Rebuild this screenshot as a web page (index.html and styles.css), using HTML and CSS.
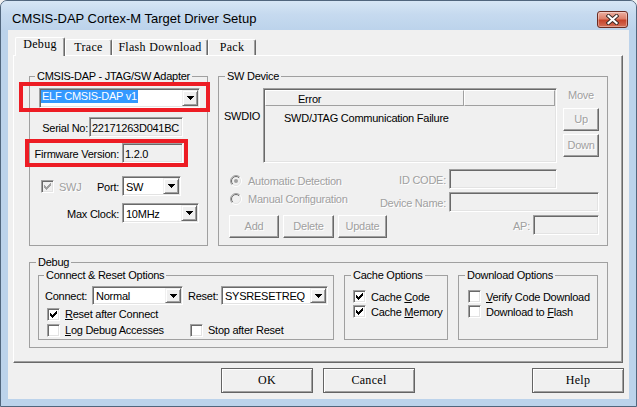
FILE: index.html
```html
<!DOCTYPE html>
<html lang="en">
<head>
<meta charset="utf-8">
<title>CMSIS-DAP Cortex-M Target Driver Setup</title>
<link rel="stylesheet" href="styles.css">
</head>
<body>
<div class="window">
  <div class="titlebar">
    <div class="title">CMSIS-DAP Cortex-M Target Driver Setup</div>
    <div class="close">
      <svg width="13" height="11" viewBox="0 0 13 11">
        <path d="M2.5 2 L10.5 9 M10.5 2 L2.5 9" stroke="#3a2a26" stroke-width="4" stroke-linecap="square"/>
        <path d="M2.5 2 L10.5 9 M10.5 2 L2.5 9" stroke="#ffffff" stroke-width="2.2" stroke-linecap="square"/>
      </svg>
    </div>
  </div>
  <div class="client">
    <div class="tabs">
      <div class="tab sel w-debug">Debug</div>
      <div class="tab w-trace">Trace</div>
      <div class="tab w-flash">Flash Download</div>
      <div class="tab w-pack">Pack</div>
    </div>
    <div class="panel">
      <div class="toprow">
        <fieldset class="grp adapter">
          <legend class="lg5">CMSIS-DAP - JTAG/SW Adapter</legend>
          <div class="row r-adapter">
            <div class="combo w-adp">
              <span class="val val-hl"><span class="hl">ELF CMSIS-DAP v1</span></span>
              <span class="drop"><svg width="7" height="4" viewBox="0 0 7 4"><path d="M0 0h7v1H0zM1 1h5v1H1zM2 2h3v1H2zM3 3h1v1H3z"/></svg></span>
            </div>
          </div>
          <div class="row r-serial">
            <span class="lbl w-serial">Serial No:</span>
            <span class="tb w-sn">22171263D041BC</span>
          </div>
          <div class="row r-fw">
            <span class="lbl w-l89">Firmware Version:</span>
            <span class="tb w-fw">1.2.0</span>
          </div>
          <div class="row r-swj">
            <span class="lblcell">
              <span class="cb cb-dis"><svg width="7" height="7" viewBox="0 0 7 7" fill="#a0a0a0"><path d="M6 0h1v1H6zM5 1h2v1H5zM0 2h1v1H0zM4 2h3v1H4zM0 3h2v1H0zM3 3h3v1H3zM0 4h5v1H0zM1 5h3v1H1zM2 6h1v1H2z"/></svg></span>
              <span class="dis swj">SWJ</span>
              <span class="lbl port">Port:</span>
            </span>
            <div class="combo w-port">
              <span class="val">SW</span>
              <span class="drop"><svg width="7" height="4" viewBox="0 0 7 4"><path d="M0 0h7v1H0zM1 1h5v1H1zM2 2h3v1H2zM3 3h1v1H3z"/></svg></span>
            </div>
          </div>
          <div class="row r-clk">
            <span class="lbl w-l89">Max Clock:</span>
            <div class="combo w-clk">
              <span class="val">10MHz</span>
              <span class="drop"><svg width="7" height="4" viewBox="0 0 7 4"><path d="M0 0h7v1H0zM1 1h5v1H1zM2 2h3v1H2zM3 3h1v1H3z"/></svg></span>
            </div>
          </div>
        </fieldset>

        <fieldset class="grp swdev">
          <legend>SW Device</legend>
          <div class="rowA">
            <div class="swdio">SWDIO</div>
            <div class="listview">
              <div class="lv-head"><span class="lv-c1">Error</span><span class="lv-c2"></span></div>
              <div class="lv-row">SWD/JTAG Communication Failure</div>
            </div>
            <div class="movecol">
              <div class="dis move">Move</div>
              <div class="btn3d dis up">Up</div>
              <div class="btn3d dis down">Down</div>
            </div>
          </div>
          <div class="rowB">
            <div class="leftcol">
              <div class="radio-row">
                <svg width="12" height="12" viewBox="0 0 12 12">
                  <defs>
                    <linearGradient id="ra1" x1="0" y1="0" x2="1" y2="1"><stop offset="0.5" stop-color="#a0a0a0"/><stop offset="0.5" stop-color="#ffffff"/></linearGradient>
                    <linearGradient id="ra2" x1="0" y1="0" x2="1" y2="1"><stop offset="0.5" stop-color="#696969"/><stop offset="0.5" stop-color="#e3e3e3"/></linearGradient>
                  </defs>
                  <circle cx="6" cy="6" r="5.5" fill="#f0f0f0" stroke="url(#ra1)"/>
                  <circle cx="6" cy="6" r="4.5" fill="none" stroke="url(#ra2)"/>
                  <circle cx="6" cy="6" r="2" fill="#a0a0a0"/>
                </svg>
                <span class="dis">Automatic Detection</span>
              </div>
              <div class="radio-row">
                <svg width="12" height="12" viewBox="0 0 12 12">
                  <defs>
                    <linearGradient id="rb1" x1="0" y1="0" x2="1" y2="1"><stop offset="0.5" stop-color="#a0a0a0"/><stop offset="0.5" stop-color="#ffffff"/></linearGradient>
                    <linearGradient id="rb2" x1="0" y1="0" x2="1" y2="1"><stop offset="0.5" stop-color="#696969"/><stop offset="0.5" stop-color="#e3e3e3"/></linearGradient>
                  </defs>
                  <circle cx="6" cy="6" r="5.5" fill="#f0f0f0" stroke="url(#rb1)"/>
                  <circle cx="6" cy="6" r="4.5" fill="none" stroke="url(#rb2)"/>
                </svg>
                <span class="dis">Manual Configuration</span>
              </div>
              <div class="btnrow">
                <span class="btn3d dis w-add">Add</span>
                <span class="btn3d dis w-del">Delete</span>
                <span class="btn3d dis w-upd">Update</span>
              </div>
            </div>
            <div class="rightcol">
              <div class="frow"><span class="lbl dis">ID CODE:</span><span class="tb w-id"></span></div>
              <div class="frow"><span class="lbl dis">Device Name:</span><span class="tb w-dn"></span></div>
              <div class="frow"><span class="lbl dis">AP:</span><span class="tb w-ap"></span></div>
            </div>
          </div>
        </fieldset>
      </div>

      <fieldset class="grp debug">
        <legend>Debug</legend>
        <div class="dbgrow">
          <fieldset class="grp connect">
            <legend class="lg5">Connect &amp; Reset Options</legend>
            <div class="crow1">
              <span class="lbl l-connect">Connect:</span>
              <div class="combo combo19 w-conn">
                <span class="val">Normal</span>
                <span class="drop"><svg width="7" height="4" viewBox="0 0 7 4"><path d="M0 0h7v1H0zM1 1h5v1H1zM2 2h3v1H2zM3 3h1v1H3z"/></svg></span>
              </div>
              <span class="lbl l-reset">Reset:</span>
              <div class="combo combo19 w-reset">
                <span class="val">SYSRESETREQ</span>
                <span class="drop"><svg width="7" height="4" viewBox="0 0 7 4"><path d="M0 0h7v1H0zM1 1h5v1H1zM2 2h3v1H2zM3 3h1v1H3z"/></svg></span>
              </div>
            </div>
            <div class="ckrow ck-first">
              <span class="ck">
                <span class="cb"><svg width="7" height="7" viewBox="0 0 7 7"><path d="M6 0h1v1H6zM5 1h2v1H5zM0 2h1v1H0zM4 2h3v1H4zM0 3h2v1H0zM3 3h3v1H3zM0 4h5v1H0zM1 5h3v1H1zM2 6h1v1H2z"/></svg></span>
                <span class="cktext"><u>R</u>eset after Connect</span>
              </span>
            </div>
            <div class="ckrow">
              <span class="ck ck-w143">
                <span class="cb"></span>
                <span class="cktext"><u>L</u>og Debug Accesses</span>
              </span>
              <span class="ck">
                <span class="cb"></span>
                <span class="cktext">Stop after Reset</span>
              </span>
            </div>
          </fieldset>

          <fieldset class="grp cache">
            <legend>Cache Options</legend>
            <div class="cklist">
              <div class="ckrow15">
                <span class="cb"><svg width="7" height="7" viewBox="0 0 7 7"><path d="M6 0h1v1H6zM5 1h2v1H5zM0 2h1v1H0zM4 2h3v1H4zM0 3h2v1H0zM3 3h3v1H3zM0 4h5v1H0zM1 5h3v1H1zM2 6h1v1H2z"/></svg></span>
                <span class="cktext">Cache <u>C</u>ode</span>
              </div>
              <div class="ckrow15">
                <span class="cb"><svg width="7" height="7" viewBox="0 0 7 7"><path d="M6 0h1v1H6zM5 1h2v1H5zM0 2h1v1H0zM4 2h3v1H4zM0 3h2v1H0zM3 3h3v1H3zM0 4h5v1H0zM1 5h3v1H1zM2 6h1v1H2z"/></svg></span>
                <span class="cktext">Cache <u>M</u>emory</span>
              </div>
            </div>
          </fieldset>

          <fieldset class="grp download">
            <legend>Download Options</legend>
            <div class="cklist cklist9">
              <div class="ckrow15">
                <span class="cb"></span>
                <span class="cktext"><u>V</u>erify Code Download</span>
              </div>
              <div class="ckrow15">
                <span class="cb"></span>
                <span class="cktext">Download to <u>F</u>lash</span>
              </div>
            </div>
          </fieldset>
        </div>
      </fieldset>
    </div>
    <div class="bottom">
      <div class="pbtn ok">OK</div>
      <div class="pbtn cancel">Cancel</div>
      <div class="pbtn help">Help</div>
    </div>
  </div>
  <div class="mark mark1"></div>
  <div class="mark mark2"></div>
</div>
</body>
</html>
```
FILE: styles.css
```css
* { box-sizing: border-box; }
html, body { margin: 0; padding: 0; }
body {
  width: 637px; height: 407px; overflow: hidden;
  background: #f0f0f0;
  font-family: "Liberation Sans", Arial, sans-serif;
  font-size: 11px; letter-spacing: -0.25px; color: #000;
}
.window {
  position: relative;
  width: 637px; height: 407px;
  border: 1px solid #51667d;
  border-radius: 7px 7px 0 0;
  background: #bcd3eb;
  display: flex; flex-direction: column;
  overflow: hidden;
}
.titlebar {
  flex: none; height: 29px;
  display: flex; align-items: flex-start;
  padding: 10px 8px 0 11px;
  background: linear-gradient(180deg, #d7e6f5 0%, #c6daef 45%, #bcd3eb 100%);
}
.title { flex: 1; font-size: 13px; letter-spacing: 0; line-height: 16px; white-space: nowrap; }
.close {
  width: 31px; height: 17px;
  border: 1px solid #6b2c22; border-radius: 3px;
  background: linear-gradient(180deg, #ecb0a2 0%, #dd806a 45%, #c7442b 55%, #d47058 100%);
  box-shadow: inset 0 0 0 1px rgba(255,255,255,0.35);
  display: flex; align-items: center; justify-content: center;
}
.client {
  flex: 1; margin: 0 7px 7px;
  background: #f0f0f0;
  padding: 7px 0 0 5px;
  display: flex; flex-direction: column;
}

/* tabs */
.tabs { display: flex; align-items: flex-end; height: 18px; margin-left: 2px; position: relative; z-index: 2; }
.tab {
  height: 16px; background: #f0f0f0;
  border-top: 1px solid #fff; border-left: 1px solid #fff; border-right: 1px solid #696969;
  box-shadow: inset -1px 0 #a0a0a0;
  border-radius: 2px 2px 0 0;
  font-family: "Liberation Serif", "Times New Roman", serif;
  font-size: 12px; letter-spacing: 0.3px; line-height: 13px;
  text-align: center; padding-top: 1px; white-space: nowrap;
}
.tab.sel { height: 19px; margin-bottom: -1px; padding-top: 0; }
.w-debug { width: 50px; }
.w-trace { width: 47px; }
.w-flash { width: 96px; }
.w-pack { width: 48px; }

.panel {
  position: relative; z-index: 1;
  width: 610px; height: 308px;
  border-top: 1px solid #fff; border-left: 1px solid #fff;
  border-right: 1px solid #696969; border-bottom: 1px solid #696969;
  box-shadow: inset -1px -1px #a0a0a0;
  padding: 14px 0 0 15px;
}

/* group boxes */
.grp { margin: 0; padding: 0; border: 1px solid #a0a0a0; min-width: 0; }
.grp > legend { padding: 0 2px; margin-left: 6px; line-height: 13px; font-size: 11px; }
.grp > legend.lg5 { margin-left: 5px; }
.toprow { display: flex; gap: 10px; height: 176px; }
.adapter { width: 179px; height: 176px; }
.swdev { width: 390px; height: 176px; }
.debug { width: 579px; height: 92px; margin-top: 10px; }

/* common controls */
.row { display: flex; align-items: center; height: 20px; }
.lbl { flex: none; line-height: 13px; padding-top: 2px; white-space: nowrap; }
.dis { color: #a0a0a0; text-shadow: 1px 1px 0 #fff; }
.tb {
  flex: none; display: flex; align-items: center;
  height: 20px; padding: 2px 0 0 2px;
  line-height: 13px; white-space: nowrap; overflow: hidden;
  border: 1px solid; border-color: #a0a0a0 #fff #fff #a0a0a0;
  box-shadow: inset 1px 1px #696969, inset -1px -1px #e3e3e3;
  background: #f0f0f0;
}
.combo {
  flex: none; display: flex; height: 20px;
  border: 1px solid; border-color: #a0a0a0 #fff #fff #a0a0a0;
  box-shadow: inset 1px 1px #696969, inset -1px -1px #e3e3e3;
  background: #fff;
}
.combo19 { height: 19px; }
.combo .val {
  flex: 1; display: flex; align-items: center;
  padding: 2px 0 0 3px; line-height: 13px; white-space: nowrap; overflow: hidden;
}
.combo .val-hl { padding: 1px 0 0 1px; align-items: flex-start; }
.hl { background: #3399ff; color: #fff; padding: 0 1px; line-height: 13px; }
.drop {
  flex: none; width: 16px; margin: 1px 1px 1px 0;
  display: flex; align-items: center; justify-content: center;
  background: #f0f0f0;
  border: 1px solid; border-color: #f0f0f0 #696969 #696969 #f0f0f0;
  box-shadow: inset 1px 1px #fff, inset -1px -1px #a0a0a0;
}
.cb {
  flex: none; width: 13px; height: 13px;
  border: 1px solid; border-color: #a0a0a0 #fff #fff #a0a0a0;
  box-shadow: inset 1px 1px #696969, inset -1px -1px #e3e3e3;
  background: #fff;
  display: flex; align-items: center; justify-content: center;
}
.cb-dis { background: #f0f0f0; }
.btn3d {
  display: flex; align-items: center; justify-content: center;
  height: 23px; line-height: 13px;
  border: 1px solid; border-color: #fff #696969 #696969 #fff;
  box-shadow: inset -1px -1px #a0a0a0;
  background: #f0f0f0;
}

/* adapter group */
.r-adapter { margin: 5px 0 0 9px; }
.r-serial { margin-top: 9px; }
.r-fw { margin-top: 6px; }
.r-swj { margin-top: 13px; }
.r-clk { margin-top: 7px; }
.w-adp { width: 161px; }
.w-serial { width: 58px; margin-right: 1px; text-align: right; }
.w-l89 { width: 89px; margin-right: 3px; text-align: right; }
.w-sn { width: 94px; }
.w-fw { width: 61px; }
.lblcell { flex: none; width: 89px; margin-right: 3px; display: flex; align-items: center; }
.lblcell .cb { margin-left: 11px; }
.swj { margin-left: 5px; line-height: 13px; padding-top: 2px; }
.port { margin-left: auto; }
.w-port { width: 59px; }
.w-clk { width: 77px; }

/* SW device group */
.rowA { display: flex; margin-top: 5px; height: 75px; }
.swdio { flex: none; width: 44px; padding: 22px 0 0 5px; line-height: 13px; }
.listview {
  flex: none; width: 294px; height: 75px; padding: 1px;
  border: 1px solid; border-color: #a0a0a0 #fff #fff #a0a0a0;
  box-shadow: inset 1px 1px #696969, inset -1px -1px #e3e3e3;
  background: #f0f0f0;
}
.lv-head { display: flex; height: 16px; }
.lv-c1, .lv-c2 {
  height: 16px; line-height: 13px; padding-top: 2px;
  border-top: 1px solid #fff; border-left: 1px solid #fff;
  border-right: 1px solid #a0a0a0; border-bottom: 1px solid #a0a0a0;
}
.lv-c1 { width: 199px; padding-left: 32px; }
.lv-c2 { flex: 1; }
.lv-row { padding: 6px 0 0 19px; line-height: 13px; white-space: nowrap; }
.movecol { flex: none; width: 36px; margin-left: 6px; display: flex; flex-direction: column; }
.move { line-height: 13px; text-align: center; padding-top: 1px; }
.up { margin-top: 6px; }
.down { margin-top: 3px; }
.rowB { display: flex; margin-top: 6px; padding-right: 8px; }
.leftcol { flex: none; width: 150px; padding: 3px 0 0 11px; }
.radio-row { display: flex; align-items: center; height: 18px; white-space: nowrap; }
.radio-row svg { flex: none; margin-right: 6px; }
.radio-row span { line-height: 13px; padding-top: 1px; }
.btnrow { display: flex; gap: 4px; margin: 7px 0 0 -1px; }
.btnrow .btn3d { flex: none; }
.w-add { width: 50px; }
.w-del { width: 51px; }
.w-upd { width: 49px; }
.rightcol { margin-left: auto; display: flex; flex-direction: column; align-items: flex-end; gap: 3px; }
.frow { display: flex; align-items: center; height: 20px; }
.frow .tb { margin-left: 3px; }
.w-id { width: 108px; margin-right: 42px; }
.w-dn { width: 150px; }
.w-ap { width: 66px; }

/* debug group */
.dbgrow { display: flex; gap: 10px; padding-left: 8px; }
.connect { width: 296px; height: 71px; }
.cache { width: 104px; height: 71px; }
.download { width: 140px; height: 71px; }
.crow1 { display: flex; align-items: center; height: 19px; margin-top: 4px; padding-left: 6px; }
.l-connect { width: 47px; }
.w-conn { width: 91px; }
.l-reset { width: 33px; margin-left: 5px; }
.w-reset { width: 107px; }
.ckrow { display: flex; align-items: center; height: 16px; padding-left: 8px; }
.ck-first { margin-top: 1px; }
.ck { display: flex; align-items: center; }
.ck-w143 { width: 143px; }
.cktext { line-height: 13px; padding-top: 1px; margin-left: 5px; white-space: nowrap; }
.cklist { padding: 7px 0 0 8px; }
.cklist9 { padding-left: 9px; }
.ckrow15 { display: flex; align-items: center; height: 15px; }

/* bottom buttons */
.bottom { display: flex; margin-top: 5px; height: 25px; }
.pbtn {
  width: 92px; height: 25px;
  border: 1px solid #646464;
  box-shadow: inset 1px 1px #fff, inset -1px -1px #a0a0a0;
  display: flex; align-items: center; justify-content: center;
  font-family: "Liberation Serif", "Times New Roman", serif;
  font-size: 12px; letter-spacing: 0.3px; line-height: 13px;
}
.ok { margin-left: 208px; }
.cancel { margin-left: 10px; }
.help { margin-left: auto; margin-right: 5px; }

/* annotation boxes drawn over the dialog */
.mark { position: absolute; border: 4px solid #ed1c24; z-index: 5; pointer-events: none; }
.mark1 { left: 18px; top: 81px; width: 191px; height: 30px; }
.mark2 { left: 24px; top: 138px; width: 163px; height: 28px; }
```
